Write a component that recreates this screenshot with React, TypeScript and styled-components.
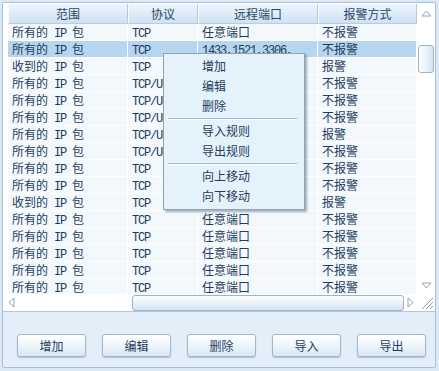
import React from 'react';
import styled, { createGlobalStyle } from 'styled-components';

const GlobalStyle = createGlobalStyle`
  html, body { margin: 0; padding: 0; }
  body {
    background: #dbe8f5;
    font-family: "Noto Sans CJK SC", "Noto Sans", sans-serif;
    font-size: 12px;
    color: #1f3d5c;
  }
`;

const Page = styled.div`
  position: relative;
  width: 439px;
  height: 371px;
  padding: 2px 0 0 2px;
  box-sizing: border-box;
`;

const Frame = styled.div`
  width: 434px;
  height: 366px;
  box-sizing: border-box;
  border: 1px solid #a7c0d8;
  border-radius: 2px;
  background: #e4eef9;
  display: flex;
  flex-direction: column;
`;

const ListArea = styled.div`
  height: 309px;
  box-sizing: border-box;
  border-bottom: 1px solid #b0c7dd;
  background: #fff;
  display: grid;
  grid-template-columns: 414px 18px;
  grid-template-rows: 291px 17px;
`;

const Content = styled.div`
  padding: 1px 0 0 5px;
  overflow: hidden;
`;

const COLS = '120px 70px 120px 99px';

const HeaderRow = styled.div`
  display: grid;
  grid-template-columns: ${COLS};
  height: 20px;
`;

const HeaderCell = styled.div`
  box-sizing: border-box;
  height: 20px;
  line-height: 19px;
  text-align: center;
  color: #2a4763;
  background: linear-gradient(#eef5fc, #dbeaf7 55%, #cfe2f3);
  border-left: 1px solid #f6fafe;
  border-right: 1px solid #b3cbe1;
  border-bottom: 1px solid #b7cee3;
`;

const Row = styled.div`
  display: grid;
  grid-template-columns: ${COLS};
  height: 17px;
`;

const Cell = styled.div<{ $sel?: boolean }>`
  box-sizing: border-box;
  height: 17px;
  line-height: 16px;
  padding-left: 4px;
  white-space: nowrap;
  overflow: hidden;
  background: ${(p) => (p.$sel ? '#b6d5ef' : '#f3f8fc')};
  border-right: 1px solid #fff;
  border-bottom: 1px solid #fff;
`;

const Latin = styled.span`
  font-family: "Liberation Mono", monospace;
  font-size: 12px;
  letter-spacing: -1.2px;
  white-space: pre;
  color: #1d3a57;
`;

const VScroll = styled.div`
  display: flex;
  flex-direction: column;
  background: #fff;
`;

const ArrowBox = styled.div<{ $h: number; $w?: number; $justify?: string }>`
  height: ${(p) => p.$h}px;
  ${(p) => (p.$w ? `width: ${p.$w}px; flex: none;` : '')}
  display: flex;
  align-items: center;
  justify-content: ${(p) => p.$justify || 'center'};
`;

const VTrack = styled.div`
  flex: 1;
`;

const VThumb = styled.div`
  margin: 21px 0 0 1px;
  width: 16px;
  height: 28px;
  box-sizing: border-box;
  border: 1px solid #9cb3ca;
  border-radius: 3px;
  background: linear-gradient(to right, #ffffff, #e6f0f9 60%, #d3e4f3);
`;

const HScroll = styled.div`
  display: flex;
  align-items: stretch;
  background: #fff;
`;

const HTrack = styled.div`
  flex: 1;
  display: flex;
  align-items: flex-start;
`;

const HThumb = styled.div`
  margin-top: 1px;
  height: 16px;
  box-sizing: border-box;
  border: 1px solid #9cb3ca;
  border-radius: 3px;
  background: linear-gradient(#ffffff, #e8f1fa 55%, #d3e4f3);
`;

const Grip = styled.div`
  display: flex;
  align-items: flex-end;
  justify-content: flex-end;
  padding: 0 1px 1px 0;
  background: #fff;
`;

const ButtonBar = styled.div`
  flex: 1;
  display: flex;
  gap: 16px;
  padding: 22px 0 0 14px;
`;

const Button = styled.button`
  width: 69px;
  height: 23px;
  box-sizing: border-box;
  border: 1px solid #a0b8cf;
  border-radius: 3px;
  background: linear-gradient(#ffffff, #eef5fb 50%, #d6e6f4);
  box-shadow: 0 1px 1px rgba(80, 110, 140, 0.35);
  font-family: "Noto Sans CJK SC", sans-serif;
  font-size: 12px;
  color: #1f3d5c;
  padding: 0;
`;

const Menu = styled.div`
  position: absolute;
  left: 163px;
  top: 53px;
  width: 142px;
  height: 157px;
  box-sizing: border-box;
  border: 1px solid #8ea3b8;
  background: #e4f2fc;
  box-shadow: 2px 2px 2px rgba(60, 80, 100, 0.45);
  padding: 2px 0 3px;
`;

const MenuItem = styled.div`
  height: 20px;
  line-height: 20px;
  padding-left: 38px;
  color: #1f3d5c;
`;

const MenuSep = styled.div`
  height: 1px;
  margin: 2px 7px 1px 4px;
  background: #a4b8cb;
  border-bottom: 1px solid #fbfdff;
`;

function Txt({ s }: { s: string }) {
  const parts = s.split(/([\x20-\x7e]+)/).filter((x) => x.length > 0);
  return (
    <>
      {parts.map((p, i) =>
        /^[\x20-\x7e]+$/.test(p) ? <Latin key={i}>{p}</Latin> : <React.Fragment key={i}>{p}</React.Fragment>
      )}
    </>
  );
}

type R = [string, string, string, string];
// Cells hidden behind the context menu are left blank.
const rows: R[] = [
  ['所有的 IP 包', 'TCP', '任意端口', '不报警'],
  ['所有的 IP 包', 'TCP', '1433,1521,3306,', '不报警'],
  ['收到的 IP 包', 'TCP', '', '报警'],
  ['所有的 IP 包', 'TCP/UDP', '', '不报警'],
  ['所有的 IP 包', 'TCP/UDP', '', '不报警'],
  ['所有的 IP 包', 'TCP/UDP', '', '不报警'],
  ['所有的 IP 包', 'TCP/UDP', '', '报警'],
  ['所有的 IP 包', 'TCP/UDP', '', '不报警'],
  ['所有的 IP 包', 'TCP', '', '不报警'],
  ['所有的 IP 包', 'TCP', '', '不报警'],
  ['收到的 IP 包', 'TCP', '', '报警'],
  ['所有的 IP 包', 'TCP', '任意端口', '不报警'],
  ['所有的 IP 包', 'TCP', '任意端口', '不报警'],
  ['所有的 IP 包', 'TCP', '任意端口', '不报警'],
  ['所有的 IP 包', 'TCP', '任意端口', '不报警'],
  ['所有的 IP 包', 'TCP', '任意端口', '不报警'],
];

const headers = ['范围', '协议', '远程端口', '报警方式'];
const buttons = ['增加', '编辑', '删除', '导入', '导出'];

const stroke = '#8ea4bb';

const Tri = ({ dir }: { dir: 'up' | 'down' | 'left' | 'right' }) => {
  const vertical = dir === 'up' || dir === 'down';
  const w = vertical ? 11 : 7;
  const h = vertical ? 7 : 11;
  const pts =
    dir === 'up'
      ? '1,6 5.5,1 10,6'
      : dir === 'down'
      ? '1,1 5.5,6 10,1'
      : dir === 'left'
      ? '6,1 1,5.5 6,10'
      : '1,1 6,5.5 1,10';
  return (
    <svg width={w} height={h} viewBox={`0 0 ${w} ${h}`}>
      <polygon points={pts} fill="#fff" stroke={stroke} strokeWidth="1" strokeLinejoin="round" />
    </svg>
  );
};

const Spacer = styled.span`
  width: 3px;
`;

export default function App() {
  const thumbOffset = 113;
  const thumbWidth = 272;
  return (
    <Page>
      <GlobalStyle />
      <Frame>
        <ListArea>
          <Content>
            <HeaderRow>
              {headers.map((h) => (
                <HeaderCell key={h}>{h}</HeaderCell>
              ))}
            </HeaderRow>
            {rows.map((r, i) => (
              <Row key={i}>
                {r.map((c, j) => (
                  <Cell key={j} $sel={i === 1}>
                    <Txt s={c} />
                  </Cell>
                ))}
              </Row>
            ))}
          </Content>
          <VScroll>
            <ArrowBox $h={21}>
              <Tri dir="up" />
            </ArrowBox>
            <VTrack>
              <VThumb />
            </VTrack>
            <ArrowBox $h={17}>
              <Tri dir="down" />
            </ArrowBox>
          </VScroll>
          <HScroll>
            <ArrowBox $h={17} $w={16}>
              <Tri dir="left" />
            </ArrowBox>
            <HTrack>
              <HThumb style={{ marginLeft: thumbOffset, width: thumbWidth }} />
            </HTrack>
            <ArrowBox $h={17} $w={13} $justify="flex-start">
              <Spacer />
              <Tri dir="right" />
            </ArrowBox>
          </HScroll>
          <Grip>
            <svg width="13" height="13" viewBox="0 0 13 13">
              <line x1="12" y1="1" x2="1" y2="12" stroke="#8aa0b5" strokeWidth="1" />
              <line x1="12" y1="5" x2="5" y2="12" stroke="#8aa0b5" strokeWidth="1" />
              <line x1="12" y1="9" x2="9" y2="12" stroke="#8aa0b5" strokeWidth="1" />
            </svg>
          </Grip>
        </ListArea>
        <ButtonBar>
          {buttons.map((b) => (
            <Button key={b}>{b}</Button>
          ))}
        </ButtonBar>
      </Frame>
      <Menu>
        <MenuItem>增加</MenuItem>
        <MenuItem>编辑</MenuItem>
        <MenuItem>删除</MenuItem>
        <MenuSep />
        <MenuItem>导入规则</MenuItem>
        <MenuItem>导出规则</MenuItem>
        <MenuSep />
        <MenuItem>向上移动</MenuItem>
        <MenuItem>向下移动</MenuItem>
      </Menu>
    </Page>
  );
}
